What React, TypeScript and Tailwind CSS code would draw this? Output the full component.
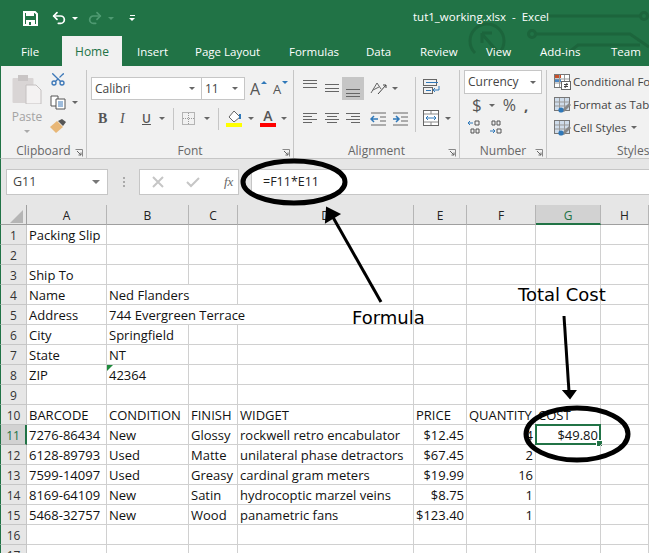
import { ReactNode } from 'react'
import { Scissors, Undo2, Redo2 } from 'lucide-react'

const tabs = [
  { label: 'File', className: 'w-[62px] pl-[21px]' },
  { label: 'Home', className: 'w-[60px] justify-center bg-[#f1f1f1] text-[#217346] text-[12px]' },
  { label: 'Insert', className: 'w-[58px] pl-[15px]' },
  { label: 'Page Layout', className: 'w-[94px] pl-[15px]' },
  { label: 'Formulas', className: 'w-[78px] pl-[15px]' },
  { label: 'Data', className: 'w-[53px] pl-[14px]' },
  { label: 'Review', className: 'w-[66px] pl-[15px]' },
  { label: 'View', className: 'w-[54px] pl-[15px]' },
  { label: 'Add-ins', className: 'w-[71px] pl-[15px]' },
  { label: 'Team', className: 'w-[43px] pl-[15px]' },
]

const columns = ['A', 'B', 'C', 'D', 'E', 'F', 'G', 'H']

type Cell = { text?: string; right?: boolean; span?: string }

const rows: Cell[][] = [
  [{ text: 'Packing Slip' }, {}, {}, {}, {}, {}, {}, {}],
  [{}, {}, {}, {}, {}, {}, {}, {}],
  [{ text: 'Ship To' }, {}, {}, {}, {}, {}, {}, {}],
  [{ text: 'Name' }, { text: 'Ned Flanders', span: 'col-span-2' }, {}, {}, {}, {}, {}],
  [{ text: 'Address' }, { text: '744 Evergreen Terrace', span: 'col-span-3' }, {}, {}, {}, {}],
  [{ text: 'City' }, { text: 'Springfield' }, {}, {}, {}, {}, {}, {}],
  [{ text: 'State' }, { text: 'NT' }, {}, {}, {}, {}, {}, {}],
  [{ text: 'ZIP' }, { text: '42364' }, {}, {}, {}, {}, {}, {}],
  [{}, {}, {}, {}, {}, {}, {}, {}],
  [{ text: 'BARCODE' }, { text: 'CONDITION' }, { text: 'FINISH' }, { text: 'WIDGET' }, { text: 'PRICE' }, { text: 'QUANTITY' }, { text: 'COST' }, {}],
  [{ text: '7276-86434' }, { text: 'New' }, { text: 'Glossy' }, { text: 'rockwell retro encabulator' }, { text: '$12.45', right: true }, { text: '4', right: true }, { text: '$49.80', right: true }, {}],
  [{ text: '6128-89793' }, { text: 'Used' }, { text: 'Matte' }, { text: 'unilateral phase detractors' }, { text: '$67.45', right: true }, { text: '2', right: true }, {}, {}],
  [{ text: '7599-14097' }, { text: 'Used' }, { text: 'Greasy' }, { text: 'cardinal gram meters' }, { text: '$19.99', right: true }, { text: '16', right: true }, {}, {}],
  [{ text: '8169-64109' }, { text: 'New' }, { text: 'Satin' }, { text: 'hydrocoptic marzel veins' }, { text: '$8.75', right: true }, { text: '1', right: true }, {}, {}],
  [{ text: '5468-32757' }, { text: 'New' }, { text: 'Wood' }, { text: 'panametric fans' }, { text: '$123.40', right: true }, { text: '1', right: true }, {}, {}],
  [{}, {}, {}, {}, {}, {}, {}, {}],
  [{}, {}, {}, {}, {}, {}, {}, {}],
]

function Caret({ className = '' }: { className?: string }) {
  return <span className={`inline-block w-0 h-0 border-x-[3px] border-x-transparent border-t-[3px] border-t-[#666] ${className}`} />
}

function Launcher() {
  return (
    <svg width="8" height="8" viewBox="0 0 8 8" className="absolute right-[3px] bottom-[1px]">
      <path d="M0.5 0.5H7.5V7.5" fill="none" stroke="#888" />
      <path d="M2 2L6 6M6 3.5V6H3.5" fill="none" stroke="#666" />
    </svg>
  )
}

function Group({ label, width, children }: { label: string; width: string; children: ReactNode }) {
  return (
    <div className={`relative flex flex-col shrink-0 border-r border-[#c6c6c6] h-[88px] ${width}`}>
      <div className="flex-1 min-h-0">{children}</div>
      <div className="h-[15px] text-center text-[12px] leading-[15px] text-[#666]">{label}</div>
      <Launcher />
    </div>
  )
}

// lines: [x1, x2, y] inside a 16x23 box
function Lines({ lines }: { lines: number[][] }) {
  return (
    <svg width="16" height="23" viewBox="0 0 16 23" className="text-[#666] shrink-0">
      {lines.map(([x1, x2, y], i) => (
        <line key={i} x1={x1} x2={x2} y1={y + 0.5} y2={y + 0.5} stroke="currentColor" />
      ))}
    </svg>
  )
}

function StyleRow({ label, variant, caret = false }: { label: string; variant: 'cond' | 'table' | 'cell'; caret?: boolean }) {
  return (
    <div className="flex items-center h-[23px] gap-[2px] whitespace-nowrap text-[11.5px] text-[#444]">
      <svg width="17" height="16" viewBox="0 0 17 16" className="shrink-0">
        <rect x="0.5" y="0.5" width="15" height="13" fill={variant === 'cond' ? '#fff' : '#cfdcea'} stroke="#777" />
        {variant === 'cond' && <rect x="1" y="1" width="6" height="3" fill="#c8502a" />}
        {variant === 'cond' && <rect x="1" y="5" width="6" height="3" fill="#4a86c5" />}
        <path d="M1 5H15M1 9H15M5.5 1V13M10.5 1V13" stroke="#999" fill="none" />
        {variant === 'cond' ? (
          <g>
            <rect x="7.5" y="7.5" width="9" height="8" fill="#fff" stroke="#666" />
            <path d="M10 10.5H14M10 12.5H14M13 9L11 14" stroke="#444" fill="none" />
          </g>
        ) : (
          <g>
            <path d="M7 14L15 6L17 8L10 15Z" fill="#888" />
            <circle cx="7" cy="13" r="2.6" fill="#2f78b9" />
          </g>
        )}
      </svg>
      <span>{label}</span>
      {caret && <Caret className="ml-[2px]" />}
    </div>
  )
}

export default function App() {
  return (
    <div className="relative w-[649px] h-[553px] overflow-hidden bg-white font-['Open_Sans',sans-serif]">
      {/* Green header: title bar and tabs */}
      <div className="relative bg-[#217346] h-[66px]">
        <svg width="189" height="66" viewBox="460 0 189 66" className="absolute right-0 top-0" fill="none" stroke="#1c653c" strokeWidth="3">
          <path d="M475 53A17 17 0 1 1 499 53" />
          <path d="M482 34L497 51M482 33H492M482 33V43" />
          <circle cx="532" cy="34" r="3.5" />
          <path d="M536 34H630L649 47" />
          <path d="M545 16H640" />
          <circle cx="644" cy="16" r="3.5" />
          <path d="M568 53L578 45H640" />
        </svg>

        <div className="relative h-[36px] flex items-center text-white">
          <svg width="15" height="15" viewBox="0 0 15 15" className="ml-[23px]">
            <path d="M1 1H12L14 3V14H1Z" fill="none" stroke="#fff" strokeWidth="2" />
            <path d="M3 1H11V5H3Z" fill="#fff" />
            <path d="M3 9H12V14H3Z" fill="#fff" />
            <rect x="6" y="11" width="2" height="3" fill="#217346" />
          </svg>
          <Undo2 size={16} strokeWidth={2.6} className="ml-[13px]" />
          <Caret className="ml-[5px] !border-t-white" />
          <Redo2 size={16} strokeWidth={2.6} className="ml-[9px] text-[#4f9a72]" />
          <Caret className="ml-[5px] !border-t-[#4f9a72]" />
          <span className="ml-[15px] flex flex-col items-center gap-[2px]">
            <span className="block w-[5px] h-px bg-white" />
            <Caret className="!border-t-white" />
          </span>
          <span className="absolute left-[413px] top-[8px] text-[11.5px] leading-[18px] whitespace-pre">tut1_working.xlsx  -  Excel</span>
        </div>

        <div className="relative h-[30px] flex text-[11.5px] leading-[31px] text-white">
          {tabs.map((tab) => (
            <div key={tab.label} className={`flex shrink-0 whitespace-nowrap ${tab.className}`}>
              {tab.label}
            </div>
          ))}
        </div>
      </div>

      {/* Ribbon */}
      <div className="h-[93px] bg-[#f1f1f1] border-b border-[#c6c6c6] border-l border-l-[#217346] flex pt-[4px] overflow-hidden">
        <Group label="Clipboard" width="w-[86px]">
          <div className="flex">
            <div className="w-[49px] flex flex-col items-center pt-[4px] pl-[3px]">
              <svg width="30" height="30" viewBox="0 0 30 30">
                <rect x="0.5" y="4" width="21" height="25" rx="1" fill="#d9d5d5" />
                <rect x="6" y="1" width="10" height="6" fill="#c9c5c5" />
                <path d="M14 11H24L29 16V30H14Z" fill="#f4f2f2" stroke="#c4c0c0" />
              </svg>
              <span className="mt-[5px] text-[12px] leading-[16px] text-[#a3a3a3]">Paste</span>
              <Caret className="mt-[5px] !border-t-[#aaa]" />
            </div>
            <div className="flex flex-col pt-[1px]">
              <Scissors size={16} className="text-[#3d78b8] -rotate-90" />
              <div className="flex items-center mt-[8px]">
                <svg width="16" height="15" viewBox="0 0 16 15">
                  <path d="M1 1H8V11H1Z" fill="#fff" stroke="#555" />
                  <path d="M6 4H15V14H6Z" fill="#fff" stroke="#555" />
                  <path d="M8 7H13M8 9H13M8 11H13" stroke="#3d78b8" />
                </svg>
                <Caret className="ml-[6px]" />
              </div>
              <svg width="16" height="15" viewBox="0 0 16 15" className="mt-[9px]">
                <path d="M0 8L7 2L13 8L6 14Z" fill="#e8b777" />
                <path d="M8 2L12 0L16 3L13 7Z" fill="#555" />
              </svg>
            </div>
          </div>
        </Group>

        <Group label="Font" width="w-[207px]">
          <div className="pl-[4px] pt-[7px]">
            <div className="flex items-center">
              <div className="w-[111px] h-[23px] bg-white border border-[#c6c6c6] flex items-center justify-between px-[3px] text-[12px] text-[#444]">
                <span>Calibri</span>
                <Caret className="mr-[3px]" />
              </div>
              <div className="w-[43px] h-[23px] bg-white border border-l-0 border-[#c6c6c6] flex items-center justify-between px-[3px] text-[12px] text-[#444]">
                <span>11</span>
                <Caret className="mr-[3px]" />
              </div>
              <span className="relative ml-[5px] text-[16px] leading-[20px] text-[#555] w-[23px]">
                A
                <span className="absolute left-[11px] top-[2px] border-x-[3px] border-x-transparent border-b-[3px] border-b-[#2f78b9]" />
              </span>
              <span className="relative text-[13px] leading-[20px] text-[#555] w-[14px]">
                A
                <span className="absolute left-[9px] top-[2px] border-x-[3px] border-x-transparent border-t-[3px] border-t-[#2f78b9]" />
              </span>
            </div>
            <div className="flex items-center h-[23px] mt-[7px] text-[#555] text-[12px]">
              <span className="ml-[7px] w-[22px] font-['Liberation_Serif',serif] font-bold text-[14px]">B</span>
              <span className="w-[22px] font-['Liberation_Serif',serif] italic text-[14px]">I</span>
              <span className="w-[14px] underline font-semibold">U</span>
              <Caret className="ml-[3px]" />
              <span className="w-px h-[22px] bg-[#c6c6c6] ml-[8px]" />
              <svg width="14" height="14" viewBox="0 0 14 14" className="ml-[8px]">
                <rect x="0.5" y="0.5" width="12" height="12" fill="none" stroke="#777" strokeDasharray="1 1" />
                <path d="M6.5 1V13M1 6.5H13" stroke="#999" strokeDasharray="1 1" />
              </svg>
              <Caret className="ml-[8px]" />
              <span className="w-px h-[22px] bg-[#c6c6c6] ml-[8px]" />
              <svg width="17" height="19" viewBox="0 0 17 19" className="ml-[7px]">
                <path d="M3 8L8 2L14 8L8 13Z" fill="#fff" stroke="#666" />
                <path d="M13 5H15V10H13Z" fill="#2f78b9" />
                <rect x="0" y="14" width="16" height="4" fill="#ffff00" />
              </svg>
              <Caret className="ml-[5px]" />
              <span className="ml-[6px] relative w-[16px] h-[19px] flex flex-col items-center">
                <span className="text-[14px] leading-[14px] font-semibold text-[#555]">A</span>
                <span className="absolute bottom-[1px] w-[16px] h-[4px] bg-[#ff0000]" />
              </span>
              <Caret className="ml-[5px]" />
            </div>
          </div>
        </Group>

        <Group label="Alignment" width="w-[166px]">
          <div className="flex pt-[7px]">
            <div className="w-[121px] shrink-0 pl-[5px] flex flex-col">
              <div className="flex items-center h-[23px]">
                <span className="w-[22px] flex justify-center"><Lines lines={[[1, 15, 3], [1, 15, 6], [1, 15, 10]]} /></span>
                <span className="w-[22px] flex justify-center"><Lines lines={[[1, 15, 7], [1, 15, 11], [1, 15, 14]]} /></span>
                <span className="w-[22px] -ml-px h-[23px] bg-[#c6c6c6] flex justify-center"><Lines lines={[[1, 15, 12], [1, 15, 16], [1, 15, 19]]} /></span>
                <svg width="18" height="16" viewBox="0 0 18 16" className="ml-[6px]">
                  <path d="M1 12L7 2L11 8M3 9L9 6" fill="none" stroke="#666" />
                  <path d="M8 13L16 4M13 4H16V7" fill="none" stroke="#444" />
                </svg>
                <Caret className="ml-[4px]" />
              </div>
              <div className="flex items-center h-[23px] mt-[7px]">
                <span className="w-[22px] flex justify-center"><Lines lines={[[1, 15, 6], [1, 10, 9], [1, 15, 12], [1, 10, 15]]} /></span>
                <span className="w-[22px] flex justify-center"><Lines lines={[[1, 15, 6], [3, 13, 9], [1, 15, 12], [3, 13, 15]]} /></span>
                <span className="w-[22px] -ml-px flex justify-center"><Lines lines={[[1, 15, 6], [6, 15, 9], [1, 15, 12], [6, 15, 15]]} /></span>
                <svg width="16" height="14" viewBox="0 0 16 14" className="ml-[6px]">
                  <path d="M1 7H8M4 4L1 7L4 10" fill="none" stroke="#2f78b9" strokeWidth="1.5" />
                  <path d="M1 1H16M10 5H16M10 9H16M1 13H16" stroke="#666" />
                </svg>
                <svg width="16" height="14" viewBox="0 0 16 14" className="ml-[6px]">
                  <path d="M1 7H7M4 4L7 7L4 10" fill="none" stroke="#2f78b9" strokeWidth="1.5" />
                  <path d="M1 1H16M9 5H16M9 9H16M1 13H16" stroke="#666" />
                </svg>
              </div>
            </div>
            <span className="w-px h-[55px] bg-[#c6c6c6]" />
            <div className="flex flex-col pl-[7px] pt-[2px]">
              <svg width="17" height="16" viewBox="0 0 17 16">
                <rect x="0.5" y="0.5" width="13" height="6" fill="none" stroke="#666" />
                <rect x="0.5" y="8.5" width="9" height="6" fill="none" stroke="#666" />
                <path d="M3 3.5H15M3 11.5H8" stroke="#2f78b9" />
                <path d="M16 7V11H10M12 9L10 11L12 13" fill="none" stroke="#2f78b9" />
              </svg>
              <div className="flex items-center mt-[15px]">
                <svg width="16" height="16" viewBox="0 0 16 16">
                  <rect x="0.5" y="0.5" width="15" height="15" fill="#fff" stroke="#666" />
                  <path d="M3 8H13M3 8L5 6M3 8L5 10M13 8L11 6M13 8L11 10" fill="none" stroke="#2f78b9" />
                  <path d="M1 4H15M1 12H15M8 1V4M8 12V15" stroke="#888" />
                </svg>
                <Caret className="ml-[6px]" />
              </div>
            </div>
          </div>
        </Group>

        <Group label="Number" width="w-[87px]">
          <div className="pl-[4px]">
            <div className="w-[78px] h-[24px] bg-white border border-[#c6c6c6] flex items-center justify-between pl-[3px] pr-[5px] text-[12px] text-[#444]">
              <span>Currency</span>
              <Caret />
            </div>
            <div className="flex items-center h-[22px] pl-[8px] text-[#555]">
              <span className="text-[17px] leading-[22px]">$</span>
              <Caret className="ml-[7px]" />
              <span className="ml-[8px] text-[16px] leading-[22px]">%</span>
              <span className="ml-[8px] text-[15px] font-bold leading-[14px]">,</span>
            </div>
            <div className="flex pl-[3px] mt-[4px] gap-[7px]">
              <svg width="15" height="14" viewBox="0 0 15 14">
                <path d="M1 3H6M3 1L1 3L3 5" fill="none" stroke="#2f78b9" />
                <path d="M8 1H12V5H8ZM4 9H7V13H4ZM9 9H12V13H9Z" fill="none" stroke="#555" />
              </svg>
              <svg width="15" height="14" viewBox="0 0 15 14">
                <path d="M3 1H6V5H3ZM8 1H11V5H8ZM8 9H12V13H8Z" fill="none" stroke="#555" />
                <path d="M1 11H6M4 9L6 11L4 13" fill="none" stroke="#2f78b9" />
              </svg>
            </div>
          </div>
        </Group>

        <div className="relative flex flex-col shrink-0 w-[103px] h-[88px] pl-[7px]">
          <div className="flex-1 min-h-0">
            <StyleRow label="Conditional Formatting" variant="cond" />
            <StyleRow label="Format as Table" variant="table" />
            <StyleRow label="Cell Styles" variant="cell" caret />
          </div>
          <div className="h-[15px] text-[12px] leading-[15px] text-[#666] pl-[63px]">Styles</div>
        </div>
      </div>

      {/* Formula bar */}
      <div className="h-[46px] bg-[#e6e6e6] border-l border-l-[#217346] flex items-start pt-[10px]">
        <div className="ml-[5px] w-[102px] h-[26px] bg-white border border-[#c6c6c6] flex items-center justify-between pl-[6px] pr-[7px] text-[12.5px] text-[#444]">
          <span>G11</span>
          <span className="border-x-[4px] border-x-transparent border-t-[4px] border-t-[#777]" />
        </div>
        <div className="w-[31px] h-[26px] flex flex-col items-center justify-center gap-[2px]">
          <span className="w-[2px] h-[2px] bg-[#aaa]" />
          <span className="w-[2px] h-[2px] bg-[#aaa]" />
          <span className="w-[2px] h-[2px] bg-[#aaa]" />
        </div>
        <div className="w-[100px] h-[26px] bg-white border border-[#c6c6c6] flex items-center text-[#bbb]">
          <svg width="14" height="12" viewBox="0 0 14 12" className="ml-[11px]">
            <path d="M2 1L12 11M12 1L2 11" stroke="#c6c6c6" strokeWidth="2" />
          </svg>
          <svg width="14" height="12" viewBox="0 0 14 12" className="ml-[21px]">
            <path d="M1 6L5 10L13 2" fill="none" stroke="#c6c6c6" strokeWidth="2" />
          </svg>
          <span className="ml-[24px] font-['Liberation_Serif',serif] italic text-[13px] text-[#666]">fx</span>
        </div>
        <div className="ml-[12px] flex-1 h-[26px] bg-white border border-[#c6c6c6] border-r-0 flex items-center pl-[11px] text-[12.5px] text-[#222]">
          =F11*E11
        </div>
      </div>

      {/* Sheet */}
      <div className="grid grid-cols-[27px_80px_82px_49px_176px_53px_69px_65px_48px] auto-rows-[20px] text-[13px] leading-[21px] text-[#111]">
        <div className="relative bg-[#e6e6e6] border-b border-r border-[#9f9f9f] border-l border-l-[#217346]">
          <span className="absolute right-[3px] bottom-[1px] w-0 h-0 border-l-[13px] border-l-transparent border-b-[13px] border-b-[#b5b5b5]" />
        </div>
        {columns.map((col) => (
          <div
            key={col}
            className={
              col === 'G'
                ? 'bg-[#d2d2d2] border-b-2 border-[#217346] border-r border-r-[#b5b5b5] text-center text-[12px] text-[#217346]'
                : 'bg-[#e6e6e6] border-b border-r border-b-[#9f9f9f] border-r-[#b5b5b5] text-center text-[12px] text-[#222]'
            }
          >
            {col}
          </div>
        ))}
        {rows.map((row, r) => (
          <div key={r} className="contents">
            <div
              className={
                r === 10
                  ? 'border-l border-l-[#217346] bg-[#d2d2d2] border-r-2 border-r-[#217346] border-b border-b-[#b5b5b5] text-center text-[12px] text-[#217346]'
                  : 'border-l border-l-[#217346] bg-[#e6e6e6] border-r border-b border-[#c6c6c6] text-center text-[12px] text-[#333]'
              }
            >
              {r + 1}
            </div>
            {row.map((cell, c) => (
              <div
                key={c}
                className={`relative border-r border-b border-[#d0d0d0] whitespace-nowrap ${cell.span ?? ''} ${cell.right ? 'text-right pr-[2px]' : 'pl-[2px]'}`}
              >
                {cell.text}
                {r === 7 && c === 1 && (
                  <span className="absolute left-0 top-0 w-0 h-0 border-r-[6px] border-r-transparent border-t-[6px] border-t-[#1e8a3c]" />
                )}
                {r === 10 && c === 6 && (
                  <span className="absolute -left-px -top-px right-[-1px] bottom-[-1px] border-2 border-[#217346]">
                    <span className="absolute -right-[4px] -bottom-[4px] w-[7px] h-[7px] bg-[#217346] border border-white" />
                  </span>
                )}
              </div>
            ))}
          </div>
        ))}
      </div>

      {/* Hand drawn annotations */}
      <svg width="649" height="553" viewBox="0 0 649 553" className="absolute left-0 top-0 pointer-events-none" fill="none" stroke="#000">
        <ellipse cx="294" cy="182" rx="51" ry="21" strokeWidth="5" />
        <path d="M381 302L330 212" strokeWidth="3" />
        <path d="M327 208L326 222L339 214Z" fill="#000" strokeWidth="2" />
        <path d="M564 316L569 392" strokeWidth="3" />
        <path d="M564 391L575 391L570 398Z" fill="#000" strokeWidth="2" />
        <ellipse cx="577" cy="434" rx="51" ry="26" strokeWidth="5" />
      </svg>
      <span className="absolute left-[352px] top-[307px] text-[18px] leading-[22px] text-black font-['DejaVu_Sans',sans-serif]">Formula</span>
      <span className="absolute left-[518px] top-[284px] text-[18px] leading-[22px] text-black font-['DejaVu_Sans',sans-serif] whitespace-nowrap">Total Cost</span>
    </div>
  )
}
